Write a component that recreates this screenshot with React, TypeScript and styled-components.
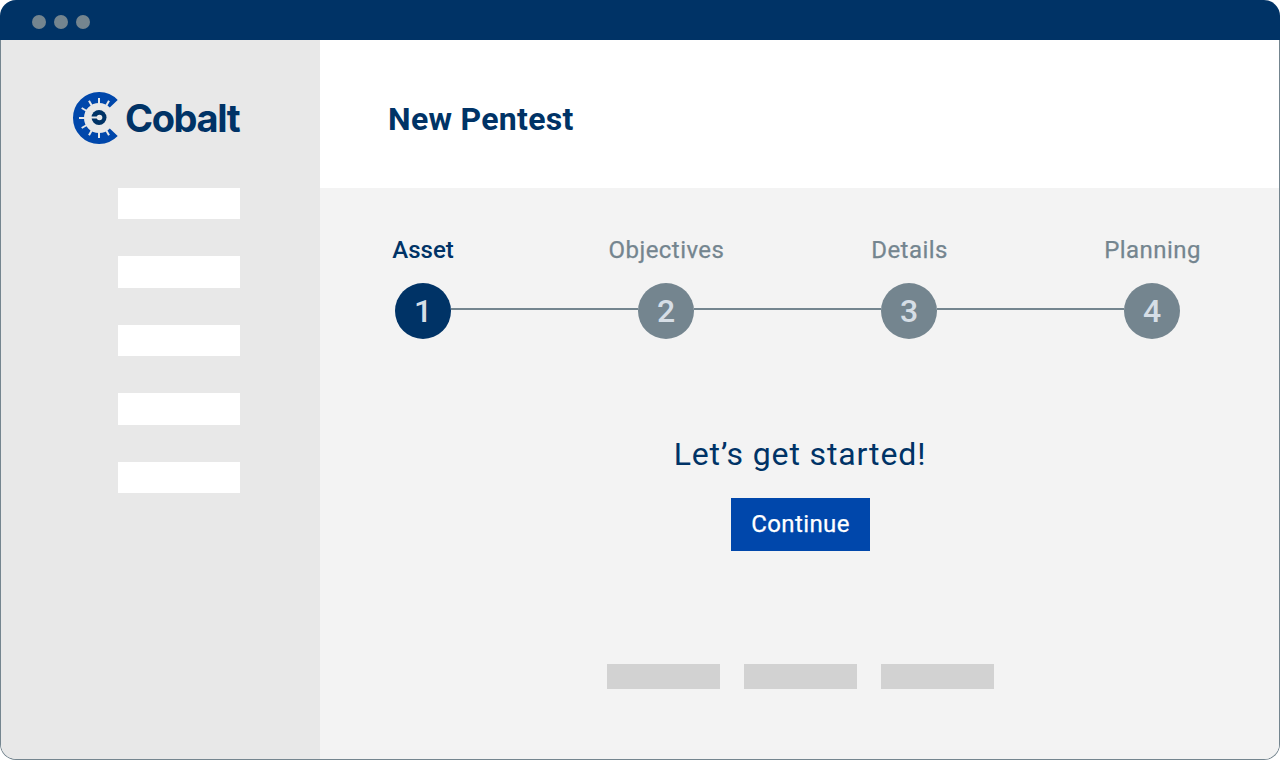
import styled, { createGlobalStyle } from "styled-components";

const navy = "#003366";
const slate = "#74858f";

const GlobalStyle = createGlobalStyle`
  html, body {
    margin: 0;
    padding: 0;
    background: #fff;
    font-family: "Roboto", "Liberation Sans", sans-serif;
  }
`;

const Frame = styled.div`
  width: 1280px;
  height: 760px;
  display: flex;
  flex-direction: column;
  overflow: hidden;
`;

const TitleBar = styled.div`
  height: 40px;
  flex: none;
  background: ${navy};
  border-radius: 16px 16px 0 0;
  display: flex;
  align-items: center;
  gap: 8px;
  padding: 3px 0 0 32px;
  box-sizing: border-box;
`;

const Dot = styled.span`
  width: 14px;
  height: 14px;
  border-radius: 50%;
  background: ${slate};
`;

const Body = styled.div`
  flex: 1;
  display: flex;
  min-height: 0;
  border: 1px solid ${slate};
  border-top: 0;
  border-radius: 0 0 16px 16px;
  overflow: hidden;
`;

const Sidebar = styled.aside`
  width: 319px;
  flex: none;
  background: #e8e8e8;
  display: flex;
  flex-direction: column;
`;

const Brand = styled.div`
  height: 147.9px;
  flex: none;
  display: flex;
  align-items: center;
  padding: 9px 0 0 71px;
  box-sizing: border-box;
`;

const BrandName = styled.span`
  font-family: "Inter", "Liberation Sans", sans-serif;
  font-weight: 700;
  font-size: 38px;
  letter-spacing: -1.4px;
  margin-left: -1px;
  color: ${navy};
`;

const NavList = styled.div`
  display: flex;
  flex-direction: column;
  gap: 37px;
  padding-left: 117px;
`;

const NavItem = styled.div`
  width: 122px;
  height: 31.5px;
  background: #fff;
`;

const Content = styled.main`
  flex: 1;
  display: flex;
  flex-direction: column;
  background: #f3f3f3;
`;

const Header = styled.header`
  height: 148px;
  flex: none;
  background: #fff;
  display: flex;
  align-items: center;
  padding: 10px 0 0 68px;
  box-sizing: border-box;
`;

const PageTitle = styled.h1`
  margin: 0;
  font-size: 32px;
  font-weight: 700;
  letter-spacing: 0.3px;
  color: ${navy};
`;

const Stepper = styled.div`
  width: 849px;
  margin: 47px 0 0 43px;
`;

const StepLabels = styled.div`
  display: flex;
  justify-content: space-between;
`;

const StepLabel = styled.span<{ $active?: boolean }>`
  width: 120px;
  padding-left: ${({ $active }) => ($active ? "0" : "1px")};
  box-sizing: border-box;
  text-align: center;
  font-size: 24px;
  line-height: 30px;
  font-weight: ${({ $active }) => ($active ? 500 : 400)};
  letter-spacing: ${({ $active }) => ($active ? "0" : "0.45px")};
  -webkit-text-stroke: ${({ $active }) => ($active ? "0" : "0.25px")};
  color: ${({ $active }) => ($active ? navy : slate)};
`;

const Track = styled.div`
  display: flex;
  align-items: center;
  padding: 0 32px;
  margin-top: 18px;
`;

const Circle = styled.div<{ $active?: boolean }>`
  width: 56px;
  height: 56px;
  flex: none;
  border-radius: 50%;
  display: flex;
  align-items: center;
  justify-content: center;
  font-size: 32px;
  font-weight: 500;
  color: #d6dee6;
  background: ${({ $active }) => ($active ? navy : slate)};
`;

const Connector = styled.div`
  flex: 1;
  height: 2px;
  margin-top: -4px;
  background: ${slate};
`;

const Prompt = styled.div`
  display: flex;
  flex-direction: column;
  align-items: center;
  margin-top: 93px;
  padding-left: 1px;
`;

const PromptText = styled.h2`
  margin: 0;
  font-size: 32px;
  line-height: 44px;
  font-weight: 400;
  letter-spacing: 0.88px;
  color: ${navy};
`;

const ContinueButton = styled.button`
  margin-top: 22px;
  width: 139px;
  height: 53px;
  border: 0;
  padding: 0 0 2px 1px;
  background: #0047ab;
  color: #fff;
  font-family: inherit;
  font-size: 24px;
  font-weight: 400;
  letter-spacing: 0.4px;
  -webkit-text-stroke: 0.25px;
`;

const Footer = styled.div`
  display: flex;
  justify-content: center;
  gap: 24px;
  margin-top: 113px;
  padding-left: 1px;
`;

const FooterBlock = styled.div`
  width: 113px;
  height: 25px;
  background: #d2d2d2;
`;

const tickAngles = [-90, -60, 90, 60, 120, 150, 180, 210, 240];

const polar = (r: number, deg: number) => {
  const rad = (deg * Math.PI) / 180;
  return { x: 27 + r * Math.cos(rad), y: 27 + r * Math.sin(rad) };
};

const LogoMark = () => {
  const start = polar(20.5, -44);
  const end = polar(20.5, 44);
  return (
    <svg width="54" height="54" viewBox="0 0 54 54" style={{ flex: "none" }}>
      <path
        d={`M${start.x} ${start.y} A20.5 20.5 0 1 0 ${end.x} ${end.y}`}
        fill="none"
        stroke="#0047ab"
        strokeWidth="11"
      />
      {tickAngles.map((a) => {
        const p1 = polar(14, a);
        const p2 = polar(20, a);
        return <line key={a} x1={p1.x} y1={p1.y} x2={p2.x} y2={p2.y} stroke="#e8e8e8" strokeWidth="2" />;
      })}
      <circle cx="27" cy="26.5" r="7.5" fill={navy} />
      <circle cx="27.5" cy="26.5" r="2.8" fill="#e8e8e8" />
      <rect x="18.5" y="25.5" width="7" height="2" fill="#e8e8e8" />
    </svg>
  );
};

const steps = ["Asset", "Objectives", "Details", "Planning"];

export default function App() {
  return (
    <>
      <GlobalStyle />
      <Frame>
        <TitleBar>
          <Dot />
          <Dot />
          <Dot />
        </TitleBar>
        <Body>
          <Sidebar>
            <Brand>
              <LogoMark />
              <BrandName>Cobalt</BrandName>
            </Brand>
            <NavList>
              <NavItem />
              <NavItem />
              <NavItem />
              <NavItem />
              <NavItem />
            </NavList>
          </Sidebar>
          <Content>
            <Header>
              <PageTitle>New Pentest</PageTitle>
            </Header>
            <Stepper>
              <StepLabels>
                {steps.map((s, i) => (
                  <StepLabel key={s} $active={i === 0}>
                    {s}
                  </StepLabel>
                ))}
              </StepLabels>
              <Track>
                <Circle $active>1</Circle>
                <Connector />
                <Circle>2</Circle>
                <Connector />
                <Circle>3</Circle>
                <Connector />
                <Circle>4</Circle>
              </Track>
            </Stepper>
            <Prompt>
              <PromptText>Let’s get started!</PromptText>
              <ContinueButton>Continue</ContinueButton>
            </Prompt>
            <Footer>
              <FooterBlock />
              <FooterBlock />
              <FooterBlock />
            </Footer>
          </Content>
        </Body>
      </Frame>
    </>
  );
}
